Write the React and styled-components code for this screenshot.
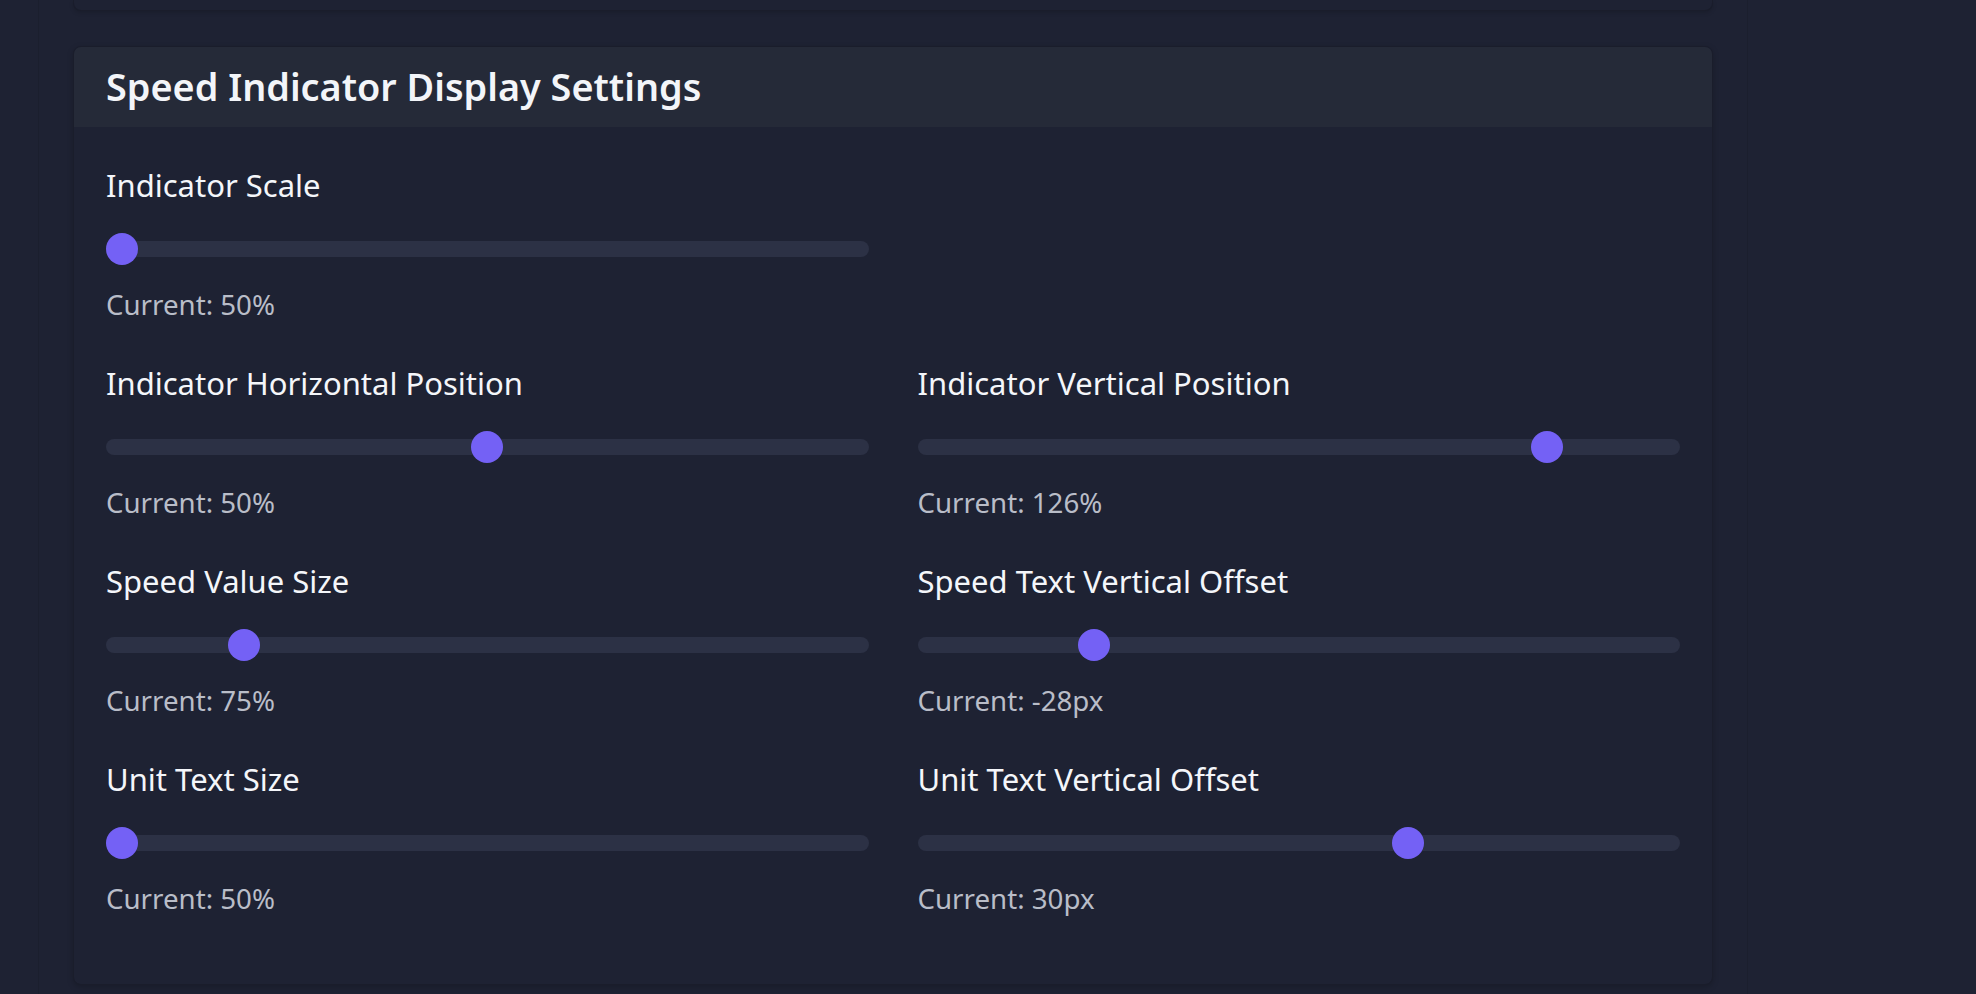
import React from "react";
import styled, { createGlobalStyle } from "styled-components";

const GlobalStyle = createGlobalStyle`
  html, body {
    margin: 0;
    padding: 0;
    background: #1e2233;
    overflow: hidden;
    font-family: "Noto Sans", "Open Sans", sans-serif;
  }
  * { box-sizing: border-box; }
`;

const Page = styled.div`
  min-height: 994px;
  background: #1e2233;
  padding-left: 38px;
`;

const Column = styled.div`
  width: 1710px;
  min-height: 994px;
  border-left: 1px solid #1b1f2e;
  border-right: 1px solid #1b1f2e;
  padding: 0 34px;
  display: flex;
  flex-direction: column;
  gap: 35px;
`;

const PrevCard = styled.div`
  height: 11px;
  border: 1px solid #1a1d2b;
  border-top: none;
  border-radius: 0 0 8px 8px;
  background: #1e2233;
  box-shadow: 0 2px 4px rgba(0, 0, 0, 0.15);
`;

const Card = styled.section`
  border: 1px solid #1a1d2b;
  border-radius: 8px;
  background: #1e2233;
  box-shadow: 0 2px 6px rgba(0, 0, 0, 0.2);
  overflow: hidden;
`;

const Header = styled.header`
  height: 80px;
  background: #252a38;
  padding: 0 32px;
  display: flex;
  align-items: center;
`;

const Title = styled.h2`
  margin: 0;
  font-size: 37.8px;
  line-height: 80px;
  font-weight: 600;
  color: #f3f5f9;
  letter-spacing: 0;
`;

const Body = styled.div`
  padding: 40px 32px 69px;
  display: grid;
  grid-template-columns: 1fr 1fr;
  column-gap: 49px;
  row-gap: 44px;
`;

const Field = styled.div`
  display: flex;
  flex-direction: column;
  grid-column-start: ${(p) => (p.$newRow ? 1 : "auto")};
`;

const Label = styled.label`
  font-size: 31px;
  line-height: 36px;
  font-weight: 400;
  color: #f4f6fa;
  margin-bottom: 30px;
`;

const Track = styled.div`
  position: relative;
  height: 32px;
  display: flex;
  align-items: center;

  &::before {
    content: "";
    display: block;
    width: 100%;
    height: 16px;
    border-radius: 8px;
    background: #2c3145;
  }
`;

const ThumbLane = styled.div`
  position: absolute;
  top: 0;
  bottom: 0;
  left: 16px;
  right: 16px;
`;

const Thumb = styled.div`
  position: absolute;
  top: 0;
  width: 32px;
  height: 32px;
  margin-left: -16px;
  border-radius: 50%;
  background: #7461f5;
`;

const Current = styled.div`
  margin-top: 22px;
  font-size: 27.7px;
  line-height: 34px;
  color: #b9bdc8;
`;

const fields = [
  { label: "Indicator Scale", value: "50%", frac: 0 },
  { label: "Indicator Horizontal Position", value: "50%", frac: 0.5, newRow: true },
  { label: "Indicator Vertical Position", value: "126%", frac: 0.84 },
  { label: "Speed Value Size", value: "75%", frac: 1 / 6 },
  { label: "Speed Text Vertical Offset", value: "-28px", frac: 0.22 },
  { label: "Unit Text Size", value: "50%", frac: 0 },
  { label: "Unit Text Vertical Offset", value: "30px", frac: 0.65 },
];

function Slider({ frac }) {
  return (
    <Track>
      <ThumbLane>
        <Thumb style={{ left: `${frac * 100}%` }} />
      </ThumbLane>
    </Track>
  );
}

export default function App() {
  return (
    <>
      <GlobalStyle />
      <Page>
        <Column>
          <PrevCard />
          <Card>
            <Header>
              <Title>Speed Indicator Display Settings</Title>
            </Header>
            <Body>
              {fields.map((f) => (
                <Field key={f.label} $newRow={f.newRow}>
                  <Label>{f.label}</Label>
                  <Slider frac={f.frac} />
                  <Current>Current: {f.value}</Current>
                </Field>
              ))}
            </Body>
          </Card>
        </Column>
      </Page>
    </>
  );
}
